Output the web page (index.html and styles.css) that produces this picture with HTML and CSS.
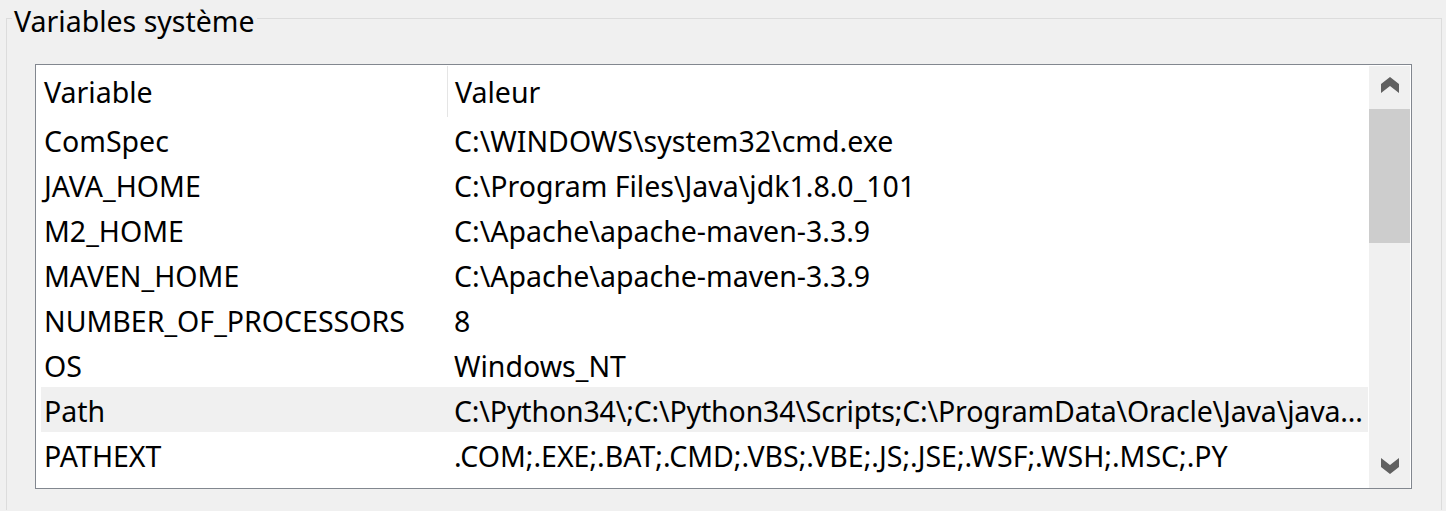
FILE: index.html
```html
<!DOCTYPE html>
<html lang="fr">
<head>
    <meta charset="UTF-8">
    <title>Variables système</title>
    <link rel="stylesheet" href="styles.css">
</head>
<body>
    <div class="group">
        <div class="group-title">Variables système</div>

        <div class="listview">
            <div class="list-body">
                <div class="list-header">
                    <div class="col-name">Variable</div>
                    <div class="col-value">Valeur</div>
                </div>
                <div class="row"><div class="col-name">ComSpec</div><div class="col-value">C:\WINDOWS\system32\cmd.exe</div></div>
                <div class="row"><div class="col-name">JAVA_HOME</div><div class="col-value">C:\Program Files\Java\jdk1.8.0_101</div></div>
                <div class="row"><div class="col-name">M2_HOME</div><div class="col-value">C:\Apache\apache-maven-3.3.9</div></div>
                <div class="row"><div class="col-name">MAVEN_HOME</div><div class="col-value">C:\Apache\apache-maven-3.3.9</div></div>
                <div class="row"><div class="col-name">NUMBER_OF_PROCESSORS</div><div class="col-value">8</div></div>
                <div class="row"><div class="col-name">OS</div><div class="col-value">Windows_NT</div></div>
                <div class="row hover"><div class="col-name">Path</div><div class="col-value long">C:\Python34\;C:\Python34\Scripts;C:\ProgramData\Oracle\Java\java...</div></div>
                <div class="row"><div class="col-name">PATHEXT</div><div class="col-value">.COM;.EXE;.BAT;.CMD;.VBS;.VBE;.JS;.JSE;.WSF;.WSH;.MSC;.PY</div></div>
            </div>

            <div class="scrollbar">
                <div class="arrow arrow-up">
                    <svg width="18" height="16" viewBox="0 0 18 16"><path d="M9 0 L18 7 L18 16 L9 9 L0 16 L0 7 Z" fill="#606060"/></svg>
                </div>
                <div class="track">
                    <div class="thumb"></div>
                </div>
                <div class="arrow arrow-down">
                    <svg width="18" height="16" viewBox="0 0 18 16"><path d="M0 0 L9 7 L18 0 L18 9 L9 16 L0 9 Z" fill="#606060"/></svg>
                </div>
            </div>
        </div>
    </div>
</body>
</html>
```

FILE: styles.css
```css
* {
    box-sizing: border-box;
    margin: 0;
    padding: 0;
}

body {
    font-family: "Noto Sans", "Open Sans", sans-serif;
    font-size: 28.5px;
    color: #000;
    background: #f0f0f0;
    height: 511px;
    overflow: hidden;
}

.group {
    margin: 18px 0 0 6px;
    width: 1436px;
    height: 492px;
    border: 1px solid #dcdcdc;
    border-bottom: none;
    padding: 0 0 0 28px;
}

.group-title {
    display: table;
    margin: -13px 0 0 -23px;
    padding: 0 2px;
    line-height: 30px;
    background: #f0f0f0;
}

.listview {
    display: flex;
    margin-top: 28px;
    width: 1377px;
    height: 425px;
    border: 1px solid #82878f;
    background: white;
}

.list-body {
    flex-grow: 1;
    min-width: 0;
    padding-left: 5px;
    padding-right: 1px;
    overflow: hidden;
}

.list-header,
.row {
    display: flex;
    align-items: center;
    padding-top: 2px;
    white-space: nowrap;
}

.list-header {
    height: 52px;
}

.row {
    height: 45px;
}

.row.hover {
    background: #f0f0f0;
}

.col-name {
    width: 406px;
    flex-shrink: 0;
    padding-left: 3px;
}

.col-value {
    flex-grow: 1;
    min-width: 0;
    padding-left: 7px;
    overflow: hidden;
    text-overflow: ellipsis;
}

.col-value.long {
    letter-spacing: -0.15px;
}

.list-header .col-value {
    align-self: flex-end;
    height: 51px;
    line-height: 52px;
    border-left: 1px solid #e5e5e5;
}

.scrollbar {
    width: 41px;
    flex-shrink: 0;
    display: flex;
    flex-direction: column;
    margin: 1px 1px 0 0;
    background: #f0f0f0;
}

.arrow {
    height: 43px;
    display: flex;
    justify-content: center;
}

.arrow-up {
    padding-top: 11px;
}

.arrow-down {
    padding-top: 13px;
}

.track {
    flex-grow: 1;
}

.thumb {
    height: 134px;
    background: #cdcdcd;
}
```
